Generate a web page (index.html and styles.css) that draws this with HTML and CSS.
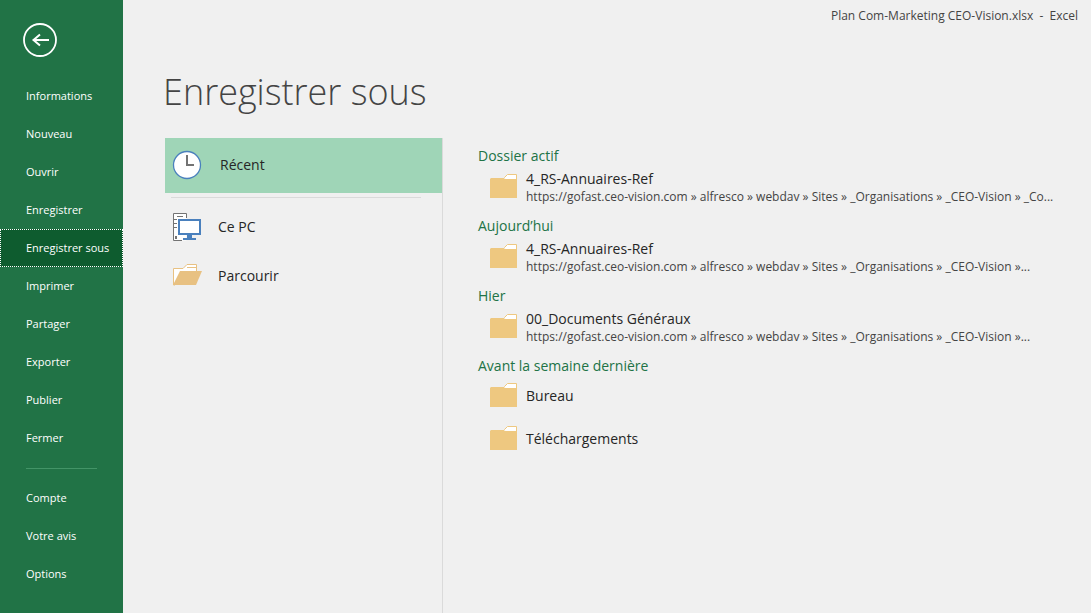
FILE: index.html
```html
<!DOCTYPE html>
<html lang="fr">
<head>
<meta charset="utf-8">
<title>Plan Com-Marketing CEO-Vision.xlsx - Excel</title>
<link rel="stylesheet" href="styles.css">
</head>
<body>
<svg class="defs" aria-hidden="true">
  <symbol id="folder" viewBox="0 0 27 25">
    <path d="M14.500 5V3.500L17.500 .5H26.500V6H14Z" fill="#fff" stroke="#eec880"/>
    <path d="M1 4H14L16 5H27V24H0V5Z" fill="#eec880"/>
    <path d="M14 4.500L16 3H26V4H17L15 5Z" fill="#fff"/>
  </symbol>
</svg>
<div class="app">
  <aside class="sidebar">
    <button class="back" type="button" aria-label="Retour">
      <svg width="34" height="34" viewBox="0 0 34 34" fill="none" stroke="#fff">
        <circle cx="17" cy="17" r="16" stroke-width="1.800"/>
        <path d="M26 17H11" stroke-width="2"/>
        <path d="M17 11.500L10.500 17L17 22.500" stroke-width="2"/>
      </svg>
    </button>
    <nav class="menu">
      <button class="menu-item" type="button">Informations</button>
      <button class="menu-item" type="button">Nouveau</button>
      <button class="menu-item" type="button">Ouvrir</button>
      <button class="menu-item" type="button">Enregistrer</button>
      <button class="menu-item active" type="button" aria-current="page">Enregistrer sous</button>
      <button class="menu-item" type="button">Imprimer</button>
      <button class="menu-item" type="button">Partager</button>
      <button class="menu-item" type="button">Exporter</button>
      <button class="menu-item" type="button">Publier</button>
      <button class="menu-item" type="button">Fermer</button>
      <hr class="menu-rule">
      <button class="menu-item" type="button">Compte</button>
      <button class="menu-item" type="button">Votre avis</button>
      <button class="menu-item" type="button">Options</button>
    </nav>
  </aside>
  <main class="page">
    <header class="titlebar">Plan Com-Marketing CEO-Vision.xlsx&nbsp; -&nbsp; Excel</header>
    <h1 class="title">Enregistrer sous</h1>
    <div class="columns">
      <section class="places">
        <button class="place selected" type="button">
          <svg width="30" height="30" viewBox="0 0 30 30">
            <circle cx="15" cy="15" r="13.500" fill="#fff" stroke="#4a80bd" stroke-width="1.300"/>
            <path d="M15 5V15H22" fill="none" stroke="#737373" stroke-width="2"/>
          </svg>
          <span>Récent</span>
        </button>
        <hr class="place-rule">
        <button class="place" type="button">
          <svg width="30" height="30" viewBox="0 0 30 30">
            <path d="M1.500 1.500H14.500V28.500H1.500Z" fill="#fff"/>
            <path d="M14.500 6V1.500H1.500V28.500H10M5 4.500H11M2 7.500H5M2 11.500H5M2 15.500H5" fill="none" stroke="#737373"/>
            <path d="M3 24H5V27H3Z" fill="#737373"/>
            <path d="M7 8H28V22H7Z" fill="#fff" stroke="#4a80bd" stroke-width="2"/>
            <path d="M15 23H20V26H24V28H11V26H15Z" fill="#4a80bd"/>
          </svg>
          <span>Ce PC</span>
        </button>
        <button class="place browse" type="button">
          <svg width="30" height="30" viewBox="0 0 30 30">
            <path d="M1.500 24V7.500H11L15 3.500H24.500V12H9L3 24Z" fill="#fff" stroke="#e8c182"/>
            <path d="M15 6.500H24" stroke="#e8c182"/>
            <path d="M8 10H30L24 24H1Z" fill="#e8c182"/>
          </svg>
          <span>Parcourir</span>
        </button>
      </section>
      <section class="recents">
        <h2 class="group">Dossier actif</h2>
        <button class="folder" type="button">
          <svg width="27" height="25"><use href="#folder"/></svg>
          <span class="folder-text"><span class="name">4_RS-Annuaires-Ref</span><span class="path">https://gofast.ceo-vision.com » alfresco » webdav » Sites » _Organisations » _CEO-Vision » _Co...</span></span>
        </button>
        <h2 class="group">Aujourd’hui</h2>
        <button class="folder" type="button">
          <svg width="27" height="25"><use href="#folder"/></svg>
          <span class="folder-text"><span class="name">4_RS-Annuaires-Ref</span><span class="path">https://gofast.ceo-vision.com » alfresco » webdav » Sites » _Organisations » _CEO-Vision »...</span></span>
        </button>
        <h2 class="group">Hier</h2>
        <button class="folder" type="button">
          <svg width="27" height="25"><use href="#folder"/></svg>
          <span class="folder-text"><span class="name">00_Documents Généraux</span><span class="path">https://gofast.ceo-vision.com » alfresco » webdav » Sites » _Organisations » _CEO-Vision »...</span></span>
        </button>
        <h2 class="group">Avant la semaine dernière</h2>
        <button class="folder short" type="button">
          <svg width="27" height="25"><use href="#folder"/></svg>
          <span class="name">Bureau</span>
        </button>
        <button class="folder short" type="button">
          <svg width="27" height="25"><use href="#folder"/></svg>
          <span class="name">Téléchargements</span>
        </button>
      </section>
    </div>
  </main>
</div>
</body>
</html>
```
FILE: styles.css
```css
* {
  box-sizing: border-box;
}

body {
  margin: 0;
  background: #f0f0f0;
  color: #262626;
  font-family: "Open Sans", "Noto Sans", sans-serif;
  font-size: 14px;
}

button {
  margin: 0;
  padding: 0;
  border: 0;
  background: none;
  color: inherit;
  font: inherit;
  text-align: left;
}

svg {
  display: block;
  flex: none;
}

.defs {
  position: absolute;
  width: 0;
  height: 0;
}

.app {
  display: flex;
  min-height: 100vh;
}

.sidebar {
  flex: none;
  width: 123px;
  background: #217346;
  color: #fff;
}

.back {
  display: block;
  margin: 23px 0 20px 23px;
}

.menu {
  display: flex;
  flex-direction: column;
}

.menu-item {
  height: 38px;
  padding: 0 0 0 26px;
  font-size: 11px;
  line-height: 16px;
  white-space: nowrap;
}

.menu-item.active {
  background: #0e5c2f;
  outline: 1px dotted #fff;
  outline-offset: -1px;
}

.menu-rule {
  width: 71px;
  height: 1px;
  margin: 11px 0 10px 26px;
  border: 0;
  background: #439467;
}

.page {
  flex: 1;
  min-width: 0;
  display: flex;
  flex-direction: column;
}

.titlebar {
  padding: 6px 13px 0 0;
  color: #444;
  font-size: 12px;
  line-height: 20px;
  text-align: right;
}

.title {
  margin: 38px 0 18px 40px;
  color: #444;
  font-size: 36px;
  font-weight: 300;
  line-height: 56px;
}

.columns {
  flex: 1;
  display: flex;
  padding-left: 42px;
}

.places {
  flex: none;
  width: 278px;
  border-right: 1px solid #dadada;
}

.place {
  display: flex;
  align-items: center;
  gap: 16px;
  width: 100%;
  height: 49px;
  padding-left: 7px;
}

.place.selected {
  gap: 18px;
  height: 55px;
  padding-bottom: 2px;
  background: #9fd5b7;
}

.place-rule {
  height: 1px;
  margin: 4px 21px 4px 6px;
  border: 0;
  background: #dadada;
}

.recents {
  flex: 1;
  min-width: 0;
  padding: 8px 0 0 35px;
}

.group {
  margin: 0;
  color: #217346;
  font-size: 14px;
  font-weight: 400;
  line-height: 20px;
}

.folder {
  display: flex;
  align-items: flex-start;
  gap: 9px;
  width: 100%;
  height: 50px;
  padding: 4px 0 0 12px;
}

.folder > svg {
  margin-top: 4px;
}

.folder-text {
  min-width: 0;
}

.name,
.path {
  display: block;
  line-height: 18px;
  white-space: nowrap;
}

.path {
  overflow: hidden;
  color: #444;
  font-size: 12px;
  text-overflow: ellipsis;
}

.folder.short {
  align-items: center;
  height: 43px;
  padding: 0 0 4px 12px;
}

.folder.short > svg {
  margin-top: 0;
}
```
